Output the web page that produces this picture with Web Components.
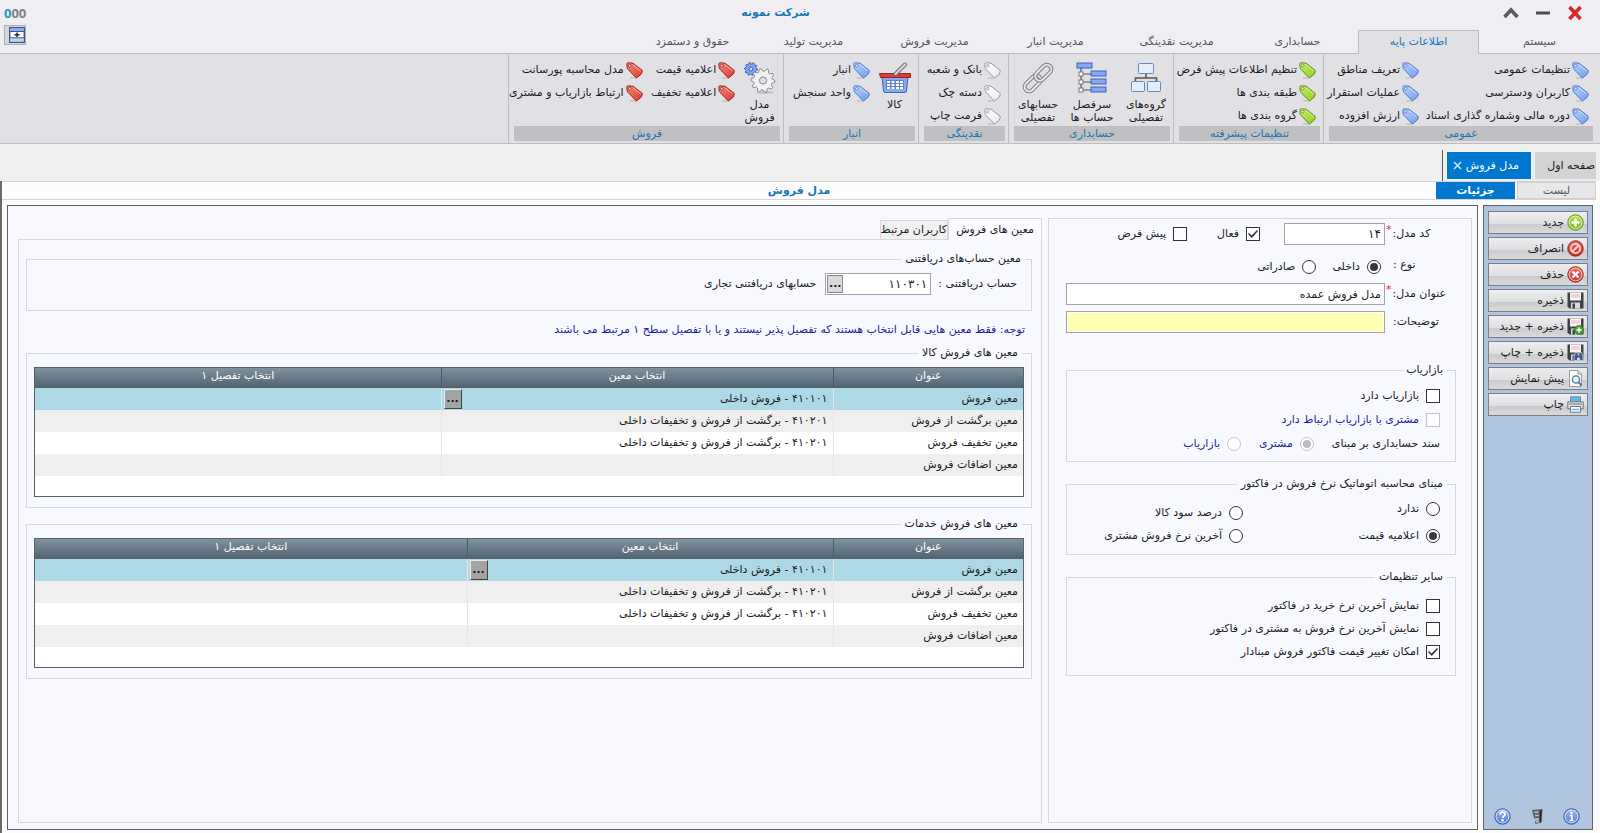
<!DOCTYPE html>
<html lang="fa" dir="rtl">
<head>
<meta charset="utf-8">
<title>شرکت نمونه</title>
<style>
  html, body { margin: 0; min-height: 100vh; }
  body {
    font: 11px/16px "DejaVu Sans", sans-serif;
    color: #1c1c1c; background: #efeff3;
    --blue: #0078cf; --title: #1a75b8; --line: #d6d7de; --note: #1f1f96;
  }
</style>
</head>
<body>
<erp-window></erp-window>

<script>
const RESET = `
  * { box-sizing: border-box; }
  :host { display: block; }
  :host([hidden]) { display: none; }
  button, input { font: inherit; color: inherit; margin: 0; padding: 0; }
  button { border: 0; background: none; cursor: default; }
`;

function define(name, css, html) {
  const tpl = document.createElement('template');
  const markup = typeof html === 'function' ? null : html;
  customElements.define(name, class extends HTMLElement {
    connectedCallback() {
      if (this.shadowRoot) return;
      tpl.innerHTML = `<style>${RESET}${css}</style>${markup ?? html(this)}`;
      this.attachShadow({ mode: 'open' }).append(tpl.content.cloneNode(true));
    }
  });
}

/* ---------- icons ---------- */
const tag = (a, b, s) => `<svg viewBox="0 0 17 17"><defs><linearGradient id="g" x1="0" y1="0" x2="1" y2="1"><stop offset="0" stop-color="${a}"/><stop offset="1" stop-color="${b}"/></linearGradient></defs>
  <path d="M4 16h7" stroke="#0002" stroke-width="1.5"/>
  <path d="M.8 2.2Q.8.8 2.2.8L7 1.2 16 8.2Q16.500 9 16.200 9.800L15.200 12.200 11 15.600Q10.200 16 9.500 15.200L1.300 6.500Z" fill="url(#g)" stroke="${s}"/>
  <path d="M7 2.700L14.800 9" stroke="#fff8" fill="none"/><circle cx="3.700" cy="3.700" r="1.300" fill="#f2f2f4" stroke="${s}" stroke-width=".8"/></svg>`;
const disk = extra => `<svg viewBox="0 0 17 17"><path d="M.5.5h16v16h-14l-2-2z" fill="#3f4148"/><path d="M3 .5h11v8H3z" fill="#fbf3f6"/><path d="M4 3h9M4 5h9" stroke="#e0b8c4"/><path d="M4 10.500h9v6H4z" fill="#d9dbe0"/><path d="M5.500 11.500h2.500v5H5.500z" fill="#3f4148"/>${extra}</svg>`;
const disc = (a, b, s, mark) => `<svg viewBox="0 0 17 17"><defs><linearGradient id="g" x1="0" y1="0" x2="0" y2="1"><stop offset="0" stop-color="${a}"/><stop offset="1" stop-color="${b}"/></linearGradient></defs><circle cx="8.500" cy="8.500" r="7.700" fill="url(#g)" stroke="${s}"/>${mark}</svg>`;
const ring = `<circle cx="8.500" cy="8.500" r="6.400" fill="none" stroke="#ffffffb0"/>`;
const gear = (cx, cy, r, fill, stroke) => {
  let p = '';
  for (let i = 0; i < 40; i++) {
    const k = i % 4, rad = k < 2 ? r : r * .78, t = (i / 40) * Math.PI * 2;
    p += (i ? 'L' : 'M') + (cx + rad * Math.cos(t)).toFixed(2) + ' ' + (cy + rad * Math.sin(t)).toFixed(2);
  }
  return `<path d="${p}Z" fill="${fill}" stroke="${stroke}" stroke-linejoin="round"/><circle cx="${cx}" cy="${cy}" r="${r * .3}" fill="#dfe0e4" stroke="${stroke}"/>`;
};
const row = y => `<path d="M5 ${y + 3}h10" stroke="#555"/><rect x="3" y="${y + 1}" width="4" height="4" fill="#fff" stroke="#777"/><rect x="15" y="${y}" width="15" height="5" fill="#86aaf2" stroke="#3d63b8"/>`;
const ICONS = {
  'tag-blue': tag('#b9d2fb', '#6f9df0', '#5078bd'),
  'tag-green': tag('#c9ee6a', '#8fce22', '#5f9013'),
  'tag-white': tag('#ffffff', '#ececf0', '#98989e'),
  'tag-red': tag('#f58a7c', '#dc3a30', '#9c2119'),
  tree: `<svg viewBox="0 0 32 32"><path d="M16 11v5M5.500 20v-4h21v4" fill="none" stroke="#555" stroke-width="1.600"/><g fill="#e4edfb" stroke="#6788b8"><rect x="8.500" y="1.500" width="15" height="10" rx="1"/><rect x="1.500" y="19.500" width="13" height="10" rx="1"/><rect x="17.500" y="19.500" width="13" height="10" rx="1"/></g></svg>`,
  outline: `<svg viewBox="0 0 32 32"><path d="M5 6v24" stroke="#333"/>${row(9)}${row(17)}${row(25)}<rect x="1" y="1" width="15" height="5" fill="#86aaf2" stroke="#3d63b8"/></svg>`,
  link: `<svg viewBox="0 0 32 32"><g fill="none" stroke-linecap="round"><g transform="rotate(-45 16 16)"><rect x="-1" y="11.500" width="19" height="9" rx="4.500" stroke="#808085" stroke-width="4"/><rect x="-1" y="11.500" width="19" height="9" rx="4.500" stroke="#e8e8ea" stroke-width="2"/><rect x="14" y="11.500" width="19" height="9" rx="4.500" stroke="#808085" stroke-width="4"/><rect x="14" y="11.500" width="19" height="9" rx="4.500" stroke="#e8e8ea" stroke-width="2"/></g></g></svg>`,
  basket: `<svg viewBox="0 0 32 32"><path d="M3 15h26l-1.500 14q-.2 1.500-1.500 1.500H6q-1.300 0-1.500-1.500z" fill="#86a8ee" stroke="#4566b0"/><path d="M7 18h18v9H7z" fill="#5f80cf"/><path d="M8 19h3v2H8zm4.500 0h3v2h-3zm4.500 0h3v2h-3zm4 0h3v2h-3zM8 22h3v2H8zm4.500 0h3v2h-3zm4.500 0h3v2h-3zm4 0h3v2h-3zM8 25h3v2H8zm4.500 0h3v2h-3zm4.500 0h3v2h-3zm4 0h3v2h-3z" fill="#fff"/><path d="M.5 11.500h31v4h-30z" fill="#dc3c36" stroke="#a02320"/><path d="M16 12.500L26 2.500" stroke="#6e6e72" stroke-width="4" stroke-linecap="round"/><path d="M16.500 12L26 2.500" stroke="#dcdce0" stroke-width="2" stroke-linecap="round"/></svg>`,
  gears: `<svg viewBox="0 0 32 32"><ellipse cx="21" cy="30.500" rx="9" ry="1.500" fill="#0002"/>${gear(7, 7, 6.500, '#7fa6ee', '#3d63b8')}${gear(19, 18.500, 12, '#f1f1f3', '#8a8a90')}</svg>`,
  close: `<svg viewBox="0 0 16 16"><path d="M2.500 2l11 12M13.500 2L2.500 14" stroke="#d8282a" stroke-width="3.600"/></svg>`,
  minus: `<svg viewBox="0 0 16 16"><path d="M1 8h14" stroke="#4c4c50" stroke-width="3"/></svg>`,
  caret: `<svg viewBox="0 0 16 16"><path d="M1.500 12L8 5l6.500 7" fill="none" stroke="#5c5c60" stroke-width="3.600"/></svg>`,
  x: `<svg viewBox="0 0 9 9"><path d="M1 1l7 7M8 1L1 8" stroke="#cfe6f8" stroke-width="1.500"/></svg>`,
  pane: `<svg viewBox="0 0 16 16"><path d="M.7.7h14.600v14.600H.7z" fill="#fff" stroke="#38598f" stroke-width="1.400"/><path d="M1.400 1.400h13.200v2.600H1.400z" fill="#8fb0ea"/><path d="M1.400 11h13.200v3.600H1.400z" fill="#b5d8f5"/><path d="M1 4.500h14M1 10.800h14" stroke="#38598f"/><path d="M5.500 7.700h5M8 5.500v4.400" stroke="#222" stroke-width="1.400"/></svg>`,
  add: disc('#b5e04a', '#7dbb22', '#5c8f16', ring + `<path d="M8.500 4.500v8M4.500 8.500h8" stroke="#fff" stroke-width="2.400"/>`),
  cancel: disc('#ec6a5e', '#c5302a', '#98211c', `<circle cx="8.500" cy="8.500" r="4.600" fill="none" stroke="#f7dcd9" stroke-width="1.600"/><path d="M5 12L12 5" stroke="#f7dcd9" stroke-width="1.800"/>`),
  remove: disc('#ef7366', '#cf342d', '#98211c', ring + `<path d="M5.500 5.500l6 6M11.500 5.500l-6 6" stroke="#fff" stroke-width="2.200"/>`),
  save: disk(''),
  'save-add': disk(`<circle cx="12" cy="12" r="4.500" fill="#4aa52f" stroke="#2f7a1b" stroke-width=".8"/><path d="M12 9.500v5M9.500 12h5" stroke="#fff" stroke-width="1.500"/>`),
  'save-find': disk(`<path d="M7 16.500v-4.500l1.500-3.500h2l1 3 1-3h2l1.500 3.500v4.500h-3.500v-2.500h-2v2.500z" fill="#46588a" stroke="#dfe5f5" stroke-width=".7"/>`),
  preview: `<svg viewBox="0 0 17 17"><path d="M2.500.500h8.500l3.500 3.500v12.500h-12z" fill="#fdfdfd" stroke="#9a9aa2"/><path d="M11 .5v3.500h3.500" fill="none" stroke="#9a9aa2"/><circle cx="9" cy="9.500" r="3.600" fill="#e7f1fb" stroke="#54749e" stroke-width="1.300"/><path d="M11.500 12.200l3 3.300" stroke="#54749e" stroke-width="2"/></svg>`,
  print: `<svg viewBox="0 0 17 17"><path d="M3.500.800h10v6h-10z" fill="#5fb8ea" stroke="#7a8794"/><path d="M.800 5.800h15.400v7H.8z" fill="#dfe1e6" stroke="#6e727b"/><path d="M2 8h13" stroke="#6e727b"/><path d="M3.500 10.500h10v5.700h-10z" fill="#fff" stroke="#6e727b"/><path d="M5 13.500h7" stroke="#5fb8ea" stroke-width="1.500"/></svg>`,
  help: disc('#9dbcf2', '#4f7bd0', '#345aa8', ring + `<path d="M6.200 6.800q0-2.600 2.400-2.600t2.400 2.100q0 1.200-1.300 2-1 .6-1 1.700" fill="none" stroke="#fff" stroke-width="1.800"/><circle cx="8.600" cy="12.300" r="1.200" fill="#fff"/>`),
  info: disc('#9dbcf2', '#4f7bd0', '#345aa8', ring + `<circle cx="8.500" cy="4.700" r="1.300" fill="#fff"/><path d="M6.800 7.500h2v5M6.500 12.500h4.200" fill="none" stroke="#fff" stroke-width="1.700"/>`),
  film: `<svg viewBox="0 0 17 17"><path d="M3 2l10.500-1-.5 7-.5 6.500-6 1.500-.5-3 4-.8v-2.200l-5 .5z" fill="#5d6168"/><path d="M5.500 3.500h4V5h-4zM6 6.800h4v1.500H6zM7 13h4v1.500H7z" fill="#b9bdc6"/><path d="M11.800 2l-.5 12.500" stroke="#25272b" stroke-width="1.600"/></svg>`,
};
define('erp-icon', `:host { display: inline-flex; flex: none; inline-size: 17px; block-size: 17px; } svg { inline-size: 100%; block-size: 100%; display: block; }`,
  el => ICONS[el.getAttribute('name')].replace('<svg', '<svg aria-hidden="true"'));

/* ---------- title bar with the main menu ---------- */
define('erp-header', `
  :host { display: grid; grid-template-columns: 1fr 48px; background: #efeff3; }
  .bar { display: flex; align-items: center; height: 26px; padding-inline-start: 17px; }
  .win { display: flex; gap: 16px; }
  .win button { display: flex; }
  .win erp-icon { inline-size: 16px; block-size: 16px; }
  h1 { flex: 1; margin: 0; text-align: center; font-size: 11px; line-height: 16px; color: var(--title); }
  nav { display: flex; padding-top: 4px; }
  nav button { width: 121px; height: 24px; padding-bottom: 2px; border: 1px solid transparent; border-bottom: 0; color: #555; white-space: nowrap; margin-bottom: -1px; position: relative; }
  nav button[aria-selected=true] { background: #e1e1e5; border-color: #bcbcc3; color: var(--title); }
  .brand { display: flex; flex-direction: column; align-items: flex-end; padding: 7px 0 0 4px; gap: 6px; grid-column: 2; grid-row: 1 / 3; }
  .brand b { font: bold 13px/12px "Open Sans", sans-serif; color: #808080; direction: ltr; }
  .brand i { font-style: normal; color: #1a9cbc; }
  .brand button { display: flex; justify-content: flex-start; width: 22px; height: 20px; padding: 1px 0; border: 1px solid #b0b0b4; background: #d8d8dc; }
  .brand erp-icon { inline-size: 16px; block-size: 16px; }
`, `
  <div class="bar">
    <div class="win">
      <button aria-label="بستن"><erp-icon name="close"></erp-icon></button>
      <button aria-label="کوچک کردن"><erp-icon name="minus"></erp-icon></button>
      <button aria-label="جمع کردن"><erp-icon name="caret"></erp-icon></button>
    </div>
    <h1>شرکت نمونه</h1>
  </div>
  <nav role="tablist">
    <button role="tab">سیستم</button><button role="tab" aria-selected="true">اطلاعات پایه</button>
    <button role="tab">حسابداری</button><button role="tab">مدیریت نقدینگی</button>
    <button role="tab">مدیریت انبار</button><button role="tab">مدیریت فروش</button>
    <button role="tab">مدیریت تولید</button><button role="tab">حقوق و دستمزد</button>
  </nav>
  <div class="brand"><b><i>0</i>00</b><button aria-label="نوار"><erp-icon name="pane"></erp-icon></button></div>
`);

/* ---------- ribbon ---------- */
define('ribbon-group', `
  :host { display: flex; flex-direction: column; padding-top: 6px; border-inline-end: 1px solid #bdbdc4; }
  .body { display: flex; height: 66px; }
  .name { height: 15px; margin: 0 3px 0 5px; background: #c0c0c2; color: var(--title); text-align: center; }
`, el => `<div class="body"><slot></slot></div><div class="name">${el.getAttribute('name')}</div>`);
define('ribbon-list', `:host { display: flex; flex-direction: column; gap: 3px; padding-inline-start: 7px; } :host([tight]) { padding-inline-start: 1px; }`, `<slot></slot>`);
define('ribbon-item', `
  button { display: flex; align-items: center; gap: 2px; height: 20px; white-space: nowrap; }
`, el => `<button><erp-icon name="tag-${el.getAttribute('tone')}"></erp-icon><slot></slot></button>`);
define('ribbon-big', `
  button { display: flex; flex-direction: column; align-items: center; width: 100%; gap: 4px; padding-top: 2px; line-height: 13px; text-align: center; }
  erp-icon { inline-size: 32px; block-size: 32px; }
`, el => `<button><erp-icon name="${el.getAttribute('icon')}"></erp-icon><span><slot></slot></span></button>`);
define('erp-ribbon', `
  :host { display: flex; height: 91px; padding-inline-start: 4px; background: #e1e1e5; border: solid #bcbcc3; border-width: 1px 0; }
  .g { flex: none; }
  .g1 { width: 273px; } .g2 { width: 150px; } .g3 { width: 165px; } .g4 { width: 90px; } .g5 { width: 135px; } .g6 { width: 275px; }
  .c1 { width: 170px; } .c2 { width: 93px; }
  ribbon-big { width: 54px; } ribbon-big.n { width: 47px; }
`, `
  <ribbon-group class="g g1" name="عمومی">
    <ribbon-list class="c1">
      <ribbon-item tone="blue">تنظیمات عمومی</ribbon-item>
      <ribbon-item tone="blue">کاربران ودسترسی</ribbon-item>
      <ribbon-item tone="blue">دوره مالی وشماره گذاری اسناد</ribbon-item>
    </ribbon-list>
    <ribbon-list>
      <ribbon-item tone="blue">تعریف مناطق</ribbon-item>
      <ribbon-item tone="blue">عملیات استقرار</ribbon-item>
      <ribbon-item tone="blue">ارزش افزوده</ribbon-item>
    </ribbon-list>
  </ribbon-group>
  <ribbon-group class="g g2" name="تنظیمات پیشرفته">
    <ribbon-list>
      <ribbon-item tone="green">تنظیم اطلاعات پیش فرض</ribbon-item>
      <ribbon-item tone="green">طبقه بندی ها</ribbon-item>
      <ribbon-item tone="green">گروه بندی ها</ribbon-item>
    </ribbon-list>
  </ribbon-group>
  <ribbon-group class="g g3" name="حسابداری">
    <ribbon-big icon="tree">گروه‌های<br>تفصیلی</ribbon-big>
    <ribbon-big icon="outline">سرفصل<br>حساب ها</ribbon-big>
    <ribbon-big icon="link">حسابهای<br>تفصیلی</ribbon-big>
  </ribbon-group>
  <ribbon-group class="g g4" name="نقدینگی">
    <ribbon-list>
      <ribbon-item tone="white">بانک و شعبه</ribbon-item>
      <ribbon-item tone="white">دسته چک</ribbon-item>
      <ribbon-item tone="white">فرمت چاپ</ribbon-item>
    </ribbon-list>
  </ribbon-group>
  <ribbon-group class="g g5" name="انبار">
    <ribbon-big class="n" icon="basket">کالا</ribbon-big>
    <ribbon-list tight>
      <ribbon-item tone="blue">انبار</ribbon-item>
      <ribbon-item tone="blue">واحد سنجش</ribbon-item>
    </ribbon-list>
  </ribbon-group>
  <ribbon-group class="g g6" name="فروش">
    <ribbon-big class="n" icon="gears">مدل<br>فروش</ribbon-big>
    <ribbon-list tight class="c2">
      <ribbon-item tone="red">اعلامیه قیمت</ribbon-item>
      <ribbon-item tone="red">اعلامیه تخفیف</ribbon-item>
    </ribbon-list>
    <ribbon-list tight>
      <ribbon-item tone="red">مدل محاسبه پورسانت</ribbon-item>
      <ribbon-item tone="red">ارتباط بازاریاب و مشتری</ribbon-item>
    </ribbon-list>
  </ribbon-group>
`);

/* ---------- open documents ---------- */
define('document-tabs', `
  :host { display: flex; align-items: flex-end; height: 37px; padding-inline-start: 4px; background: #efefef; }
  .tabs { display: flex; align-items: center; gap: 4px; height: 31px; padding-inline-end: 4px; border-inline-end: 1px solid #555; }
  .tab { display: flex; align-items: center; height: 27px; white-space: nowrap; }
  .home { width: 61px; padding-inline-start: 1px; background: #d3d3d3; }
  .open { width: 84px; background: var(--blue); color: #fff; justify-content: space-between; padding: 0 12px 0 6px; }
  .open button { display: flex; }
  .open erp-icon { inline-size: 9px; block-size: 9px; }
`, `
  <div class="tabs">
    <button class="tab home">صفحه اول</button>
    <div class="tab open"><span>مدل فروش</span><button aria-label="بستن"><erp-icon name="x"></erp-icon></button></div>
  </div>
`);

/* ---------- tool column ---------- */
define('tool-button', `
  button { display: flex; align-items: center; gap: 3px; width: 100%; height: 23px; padding: 0 3px; border: 1px solid #7b7f87; background: linear-gradient(#eeeeef, #dedfe1 55%, #c9cacd 56%, #dadadc); white-space: nowrap; }
`, el => `<button><erp-icon name="${el.getAttribute('icon')}"></erp-icon><slot></slot></button>`);
define('tool-column', `
  :host { display: flex; flex-direction: column; gap: 3px; padding: 5px 4px 4px; background: #b0c4de; border: 1px solid #5f646c; }
  .foot { display: flex; justify-content: space-between; margin-top: auto; padding: 0 8px 0 6px; }
  .foot button { display: flex; }
`, `
  <tool-button icon="add">جدید</tool-button>
  <tool-button icon="cancel">انصراف</tool-button>
  <tool-button icon="remove">حذف</tool-button>
  <tool-button icon="save">ذخیره</tool-button>
  <tool-button icon="save-add">ذخیره + جدید</tool-button>
  <tool-button icon="save-find">ذخیره + چاپ</tool-button>
  <tool-button icon="preview">پیش نمایش</tool-button>
  <tool-button icon="print">چاپ</tool-button>
  <div class="foot">
    <button aria-label="اطلاعات"><erp-icon name="info"></erp-icon></button>
    <button aria-label="فیلم"><erp-icon name="film"></erp-icon></button>
    <button aria-label="راهنما"><erp-icon name="help"></erp-icon></button>
  </div>
`);

const FIELDS = `
  fieldset { min-width: 0; margin: 0; padding: 0; border: 1px solid var(--line); }
  legend { padding: 0 4px; line-height: 16px; }
  .text { height: 22px; border: 1px solid #a3a3a8; background: #fff; padding: 0 3px; outline: 0; min-width: 0; }
  label.opt { display: flex; align-items: center; gap: 7px; height: 16px; white-space: nowrap; }
  .opt input { appearance: none; flex: none; width: 14px; height: 14px; background: #fff; border: 1px solid #333; display: grid; place-items: center; }
  .opt [type=radio] { border-radius: 50%; }
  .opt [type=radio]:checked::after { content: ""; width: 8px; height: 8px; border-radius: 50%; background: #3a3a3a; }
  .opt [type=checkbox]:checked::after { content: ""; width: 10px; height: 8px; background: #333; clip-path: polygon(0 50%, 10% 38%, 36% 70%, 90% 0, 100% 12%, 38% 100%); }
  .opt.off { color: var(--note); }
  .opt.off input { border-color: #c4c4c8; }
  .opt.off [type=radio]:checked::after { background: #bdbdc1; }
`;

/* ---------- model form ---------- */
define('model-form', `${FIELDS}
  :host { border: 1px solid var(--line); padding: 4px 15px 16px 17px; }
  legend { margin-inline-start: -7px; }
  .grid { display: grid; grid-template-columns: 71px 1fr; align-items: center; row-gap: 6px; }
  .cap { text-align: end; padding-inline-end: 8px; white-space: nowrap; }
  .cap.req { display: flex; justify-content: flex-end; padding-inline-end: 1px; }
  .star { color: #e03040; line-height: 8px; padding-inline-start: 1px; }
  .line { display: flex; align-items: center; min-height: 22px; }
  .code { width: 101px; font-size: 12px; margin-inline-end: 24px; }
  .line .opt { margin-inline-end: 30px; }
  .yellow { background: #ffffb4; box-shadow: inset 0 0 0 1px #fff; }
  .wide { width: 100%; }
  .kind { min-height: 26px; padding-top: 6px; }
  .kind .opt { margin-inline: 4px 12px; }
  .a { margin-top: 29px; padding: 10px 15px 9px; display: grid; gap: 8px; }
  .b { margin-top: 14px; padding: 9px 15px 10px; display: grid; grid-template-columns: 197px 1fr; row-gap: 7px; align-items: start; }
  .b .low { margin-top: 4px; }
  .c { margin-top: 14px; padding: 13px 15px 15px; display: grid; gap: 7px; }
  .row { display: flex; align-items: center; gap: 18px; }
`, `
  <form>
    <div class="grid">
      <label class="cap req" for="code">کد مدل:<span class="star">*</span></label>
      <div class="line"><input class="text code" id="code" value="۱۴">
        <label class="opt"><input type="checkbox" checked>فعال</label>
        <label class="opt"><input type="checkbox">پیش فرض</label></div>
      <span class="cap kind">نوع :</span>
      <div class="line kind">
        <label class="opt"><input type="radio" name="kind" checked>داخلی</label>
        <label class="opt"><input type="radio" name="kind">صادراتی</label></div>
      <label class="cap req" for="title">عنوان مدل:<span class="star">*</span></label>
      <input class="text wide" id="title" value="مدل فروش عمده">
      <label class="cap" for="note">توضیحات:</label>
      <input class="text wide yellow" id="note">
    </div>
    <fieldset class="a"><legend>بازاریاب</legend>
      <label class="opt"><input type="checkbox">بازاریاب دارد</label>
      <label class="opt off"><input type="checkbox" disabled>مشتری با بازاریاب ارتباط دارد</label>
      <div class="row"><span>سند حسابداری بر مبنای</span>
        <label class="opt off"><input type="radio" name="base" checked disabled>مشتری</label>
        <label class="opt off"><input type="radio" name="base" disabled>بازاریاب</label></div>
    </fieldset>
    <fieldset class="b"><legend>مبنای محاسبه اتوماتیک نرخ فروش در فاکتور</legend>
      <label class="opt"><input type="radio" name="rate">ندارد</label>
      <label class="opt low"><input type="radio" name="rate">درصد سود کالا</label>
      <label class="opt"><input type="radio" name="rate" checked>اعلامیه قیمت</label>
      <label class="opt"><input type="radio" name="rate">آخرین نرخ فروش مشتری</label>
    </fieldset>
    <fieldset class="c"><legend>سایر تنظیمات</legend>
      <label class="opt"><input type="checkbox">نمایش آخرین نرخ خرید در فاکتور</label>
      <label class="opt"><input type="checkbox">نمایش آخرین نرخ فروش به مشتری در فاکتور</label>
      <label class="opt"><input type="checkbox" checked>امکان تغییر قیمت فاکتور فروش مبنادار</label>
    </fieldset>
  </form>
`);

/* ---------- ledger grid ---------- */
define('ledger-grid', `
  :host { min-height: 130px; background: #fff; border: 1px solid #5a6068; }
  table { width: 100%; border-collapse: collapse; table-layout: fixed; }
  th { height: 20px; padding: 0 0 4px; font-weight: normal; line-height: 16px; color: #fff; }
  th + th { border-inline-start: 1px solid #4a5a66; }
  thead tr { background: linear-gradient(#80919f, #51626f); }
  td { height: 22px; padding: 0 5px; line-height: 16px; white-space: nowrap; }
  td + td { border-inline-start: 1px solid #e4e4e6; }
  tbody tr:nth-child(even) { background: #efefef; }
  tbody tr:first-child { background: #add8e6; }
  .name { width: 190px; } .acc { width: 392px; }
  :host([narrow]) .acc { width: 366px; }
  .pick { display: flex; justify-content: space-between; align-items: center; margin-inline-end: -3px; }
  .pick button { width: 18px; height: 20px; background: #a3a3a3; border: 1px solid; border-color: #e8e8e8 #444 #444 #e8e8e8; font-weight: bold; line-height: 18px; }
`, () => {
  const ret = '۴۱۰۲۰۱ - برگشت از فروش و تخفیفات داخلی';
  return `<table>
    <thead><tr><th class="name">عنوان</th><th class="acc">انتخاب معین</th><th>انتخاب تفصیل ۱</th></tr></thead>
    <tbody>
      <tr><td>معین فروش</td><td><div class="pick">۴۱۰۱۰۱ - فروش داخلی<button aria-label="انتخاب">...</button></div></td><td></td></tr>
      <tr><td>معین برگشت از فروش</td><td>${ret}</td><td></td></tr>
      <tr><td>معین تخفیف فروش</td><td>${ret}</td><td></td></tr>
      <tr><td>معین اضافات فروش</td><td></td><td></td></tr>
    </tbody></table>`;
});

/* ---------- sales ledgers ---------- */
define('ledger-panel', `${FIELDS}
  :host { display: flex; flex-direction: column; }
  .tabs { display: flex; align-items: flex-end; height: 21px; }
  .tabs button { height: 19px; padding: 0; width: 68px; border: 1px solid var(--line); border-bottom: 0; background: #f0f0f0; white-space: nowrap; }
  .tabs [aria-selected=true] { width: 94px; height: 22px; margin-bottom: -1px; background: #fbfbff; position: relative; }
  .page { flex: 1; border: 1px solid var(--line); padding: 11px 9px 16px 7px; }
  .one { height: 60px; padding: 6px 14px 0; }
  .one legend { margin-inline-start: -8px; }
  .row { display: flex; align-items: center; }
  .combo { display: flex; align-items: center; width: 106px; height: 22px; margin: 0 7px 0 9px; padding: 1px; border: 1px solid #a3a3a8; background: #fff; }
  .combo input { flex: 1; min-width: 0; border: 0; outline: 0; font-size: 12px; padding: 0 2px; }
  .combo button { width: 16px; height: 18px; border: 1px solid #8d8d90; background: #d9d9db; font-weight: bold; line-height: 16px; }
  .note { margin: 11px 7px 7px; color: var(--note); }
  .tbl { padding: 6px 7px 10px; }
  .tbl legend { margin-inline-start: 2px; }
  .tbl + .tbl { margin-top: 8px; }
`, `
  <div class="tabs" role="tablist"><button role="tab" aria-selected="true">معین های فروش</button><button role="tab">کاربران مرتبط</button></div>
  <div class="page">
    <fieldset class="one"><legend>معین حساب‌های دریافتنی</legend>
      <div class="row"><label for="acc">حساب دریافتنی :</label>
        <div class="combo"><input id="acc" value="۱۱۰۳۰۱"><button aria-label="انتخاب">...</button></div>
        <span>حسابهای دریافتنی تجاری</span></div>
    </fieldset>
    <p class="note">توجه: فقط معین هایی قابل انتخاب هستند که تفصیل پذیر نیستند و یا با تفصیل سطح ۱ مرتبط می باشند</p>
    <fieldset class="tbl"><legend>معین های فروش کالا</legend><ledger-grid></ledger-grid></fieldset>
    <fieldset class="tbl"><legend>معین های فروش خدمات</legend><ledger-grid narrow></ledger-grid></fieldset>
  </div>
`);

/* ---------- document ---------- */
define('sales-document', `
  :host { display: flex; flex-direction: column; flex: 1; background: #fcfcfc; border-left: 2px solid #6a6a6a; padding-bottom: 3px; }
  .head { display: grid; grid-template-columns: 1fr auto 1fr; align-items: center; height: 19px; margin-inline-start: 4px; border: solid #d4d4d8; border-width: 1px 0; }
  h2 { margin: 0; font-size: 11px; line-height: 16px; color: var(--title); }
  .tabs { display: flex; gap: 2px; height: 17px; }
  .tabs button { width: 79px; border: 1px solid #cfcfd2; background: #e8e8ea; color: #555; line-height: 14px; }
  .tabs [aria-selected=true] { background: var(--blue); border-color: var(--blue); color: #fff; font-weight: bold; }
  .main { flex: 1; display: grid; grid-template-columns: 110px 1fr; gap: 5px; padding: 5px 7px 0 5px; }
  .work { display: grid; grid-template-columns: 424px 1fr; gap: 6px; background: #f8f9ff; border: 1px solid #5f5f64; padding: 12px 5px 6px 10px; }
`, `
  <div class="head">
    <div class="tabs" role="tablist"><button role="tab">لیست</button><button role="tab" aria-selected="true">جزئیات</button></div>
    <h2>مدل فروش</h2>
  </div>
  <div class="main"><tool-column></tool-column><div class="work"><model-form></model-form><ledger-panel></ledger-panel></div></div>
`);

define('erp-window', `:host { display: flex; flex-direction: column; min-height: 100vh; }`,
  `<erp-header></erp-header><erp-ribbon></erp-ribbon><document-tabs></document-tabs><sales-document></sales-document>`);
</script>
</body>
</html>
